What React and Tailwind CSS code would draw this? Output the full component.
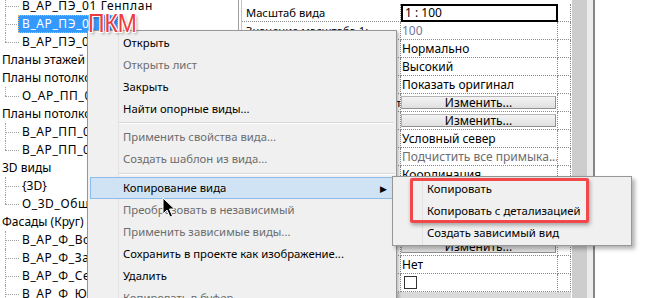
import React from 'react';

const tree = [
  { text: 'В_АР_ПЭ_01 Генплан', child: true },
  { text: 'В_АР_ПЭ_01', child: true, selected: true },
  { text: 'В_АР_ПЭ_02', child: true, last: true },
  { text: 'Планы этажей (Круг)' },
  { text: 'Планы потолков (Круг)' },
  { text: 'О_АР_ПП_01', child: true, last: true },
  { text: 'Планы потолков (Отделка)' },
  { text: 'В_АР_ПП_01', child: true },
  { text: 'В_АР_ПП_02', child: true, last: true },
  { text: '3D виды' },
  { text: '{3D}', child: true },
  { text: 'О_3D_Общий', child: true, last: true },
  { text: 'Фасады (Круг)' },
  { text: 'В_АР_Ф_Восток', child: true },
  { text: 'В_АР_Ф_Запад', child: true },
  { text: 'В_АР_Ф_Север', child: true },
  { text: 'В_АР_Ф_Юг', child: true },
];

const props = [
  { label: 'Масштаб вида', value: '1 : 100', kind: 'box' },
  { label: 'Значение масштаба       1:', value: '100', kind: 'ro' },
  { label: 'Отображать модель', value: 'Нормально' },
  { label: 'Уровень детализации', value: 'Высокий' },
  { label: 'Видимость элементов', value: 'Показать оригинал' },
  { label: 'Переопределения видимости', value: 'Изменить...', kind: 'btn' },
  { label: 'Параметры отображения', value: 'Изменить...', kind: 'btn' },
  { label: 'Ориентация', value: 'Условный север' },
  { label: 'Соединение стен', value: 'Подчистить все примыка...', kind: 'gray' },
  { label: 'Дисциплина', value: 'Координация' },
  { label: 'Показать скрытые линии', value: 'По дисциплине' },
  { label: 'Цветовая схема', value: '<нет>' },
  { label: 'Расположение схемы', value: 'Фон' },
  { label: 'Схема', value: 'Изменить...', kind: 'btn' },
  { label: 'Подложка', value: 'Нет' },
  { label: 'Обрезать вид', value: '', kind: 'check' },
];

const menu = [
  { t: 'Открыть' },
  { t: 'Открыть лист', off: true },
  { t: 'Закрыть' },
  { t: 'Найти опорные виды...' },
  { sep: 'h-[6px]' },
  { t: 'Применить свойства вида...', off: true },
  { t: 'Создать шаблон из вида...', off: true },
  { sep: 'h-[7px]' },
  { t: 'Копирование вида', hot: true, sub: true },
  { t: 'Преобразовать в независимый', off: true },
  { t: 'Применить зависимые виды...', off: true },
  { t: 'Сохранить в проекте как изображение...' },
  { t: 'Удалить' },
  { t: 'Копировать в буфер', off: true },
];

function TreeRow({ row }) {
  const wide = row.text.includes('_') ? 'tracking-[0.6px]' : '';
  return (
    <div className="flex h-[18px] items-center whitespace-nowrap">
      {row.child ? (
        <div className="relative ml-[5px] h-full w-[17px] shrink-0">
          <div className={`absolute left-0 top-0 w-0 border-l border-dotted border-[#a0a0a0] ${row.last ? 'h-[9px]' : 'h-full'}`} />
          <div className="absolute left-0 top-[9px] h-0 w-[14px] border-t border-dotted border-[#a0a0a0]" />
        </div>
      ) : (
        <div className="w-[2px] shrink-0" />
      )}
      <span
        className={
          row.selected
            ? `ml-[-4px] border border-dotted border-[#f0b070] bg-[#3399ff] pl-[3px] pr-[20px] leading-[16px] text-white ${wide}`
            : `leading-[18px] ${wide}`
        }
      >
        {row.text}
      </span>
    </div>
  );
}

function PropValue({ p }) {
  if (p.kind === 'box') {
    return <div className="h-full border-2 border-black pl-[2px] leading-[14px]">{p.value}</div>;
  }
  if (p.kind === 'btn') {
    return (
      <div className="flex h-full items-center py-[2px] pr-[1px]">
        <div className="flex h-full w-full items-center justify-center border border-[#b5b5b5] border-b-[#8f8f8f] border-r-[#8f8f8f] bg-gradient-to-b from-[#f3f3f3] to-[#e0e0e0] leading-none">
          {p.value}
        </div>
      </div>
    );
  }
  if (p.kind === 'check') {
    return (
      <div className="flex h-full items-center pl-[3px]">
        <div className="h-[13px] w-[13px] border border-[#333] bg-white" />
      </div>
    );
  }
  const color = p.kind === 'ro' ? 'text-[#7474a0]' : p.kind === 'gray' ? 'text-[#6d6d6d]' : '';
  return <div className={`overflow-hidden whitespace-nowrap pl-[1px] leading-[17px] ${color}`}>{p.value}</div>;
}

function Cursor() {
  return (
    <svg className="absolute left-[162px] top-[197px]" width="14" height="22" viewBox="0 0 14 22">
      <path d="M1 1 L1 17 L5 13 L8 20 L10.5 19 L7.5 12 L12.5 12 Z" fill="#000" stroke="#fff" strokeWidth="1" strokeLinejoin="miter" />
    </svg>
  );
}

export default function App() {
  return (
    <div className="relative h-[298px] w-[655px] overflow-hidden bg-white font-['Noto_Sans',sans-serif] text-[12px] text-black">
      <div className="flex h-full">
        {/* Диспетчер проекта */}
        <div className="mt-[-3px] w-[238px] shrink-0">
          {tree.map((row, i) => (
            <TreeRow key={i} row={row} />
          ))}
        </div>

        {/* Разделитель */}
        <div className="h-full w-[4px] shrink-0 border-l border-r border-l-[#a0a0a0] border-r-[#c4c4c4]" />

        {/* Свойства */}
        <div className="shrink-0 pt-[4px]">
          <div className="grid grid-cols-[159px_157px_13px]">
            {props.map((p, i) => (
              <React.Fragment key={i}>
                <div className="h-[18px] overflow-hidden whitespace-nowrap border-b border-r border-dotted border-[#8a8a8a] pl-[4px] text-[11.2px] leading-[18px]">
                  {p.label}
                </div>
                <div className={`h-[18px] border-dotted border-[#8a8a8a] ${p.kind === 'box' ? '' : 'border-b border-r'}`}>
                  <PropValue p={p} />
                </div>
                <div className="h-[18px] border-b border-r border-dotted border-[#8a8a8a]" />
              </React.Fragment>
            ))}
            <div className="col-span-3 h-[18px] bg-[#dadada]" />
          </div>
        </div>

        {/* Полоса прокрутки */}
        <div className="ml-[1px] flex h-full shrink-0">
          <div className="h-full w-[15px] bg-[#cdcdcd]" />
          <div className="h-full w-[6px] bg-[#ececec]" />
          <div className="h-full w-[2px] bg-[#868686]" />
        </div>
        <div className="flex-1" />
      </div>

      {/* Контекстное меню */}
      <div className="absolute left-[87px] top-[30px] w-[310px] border border-[#979797] bg-[#f0f0f0] pt-[1px] text-[11.3px] shadow-[2px_2px_3px_rgba(0,0,0,0.25)]">
        <div className="absolute bottom-0 left-[30px] top-0 w-[2px] border-l border-[#e2e2e2]" />
        {menu.map((m, i) =>
          m.sep ? (
            <div key={i} className={`relative flex items-center pl-[31px] pr-[2px] ${m.sep}`}>
              <div className="h-[2px] w-full border-t border-[#d7d7d7] bg-white" />
            </div>
          ) : (
            <div key={i} className="relative h-[22px] px-[2px]">
              <div
                className={`flex h-full items-center pl-[32px] ${m.hot ? 'border border-[#8fbbe8] bg-[#d0e3f5]' : 'border border-transparent'} ${m.off ? 'text-[#6d6d6d]' : 'text-black'}`}
              >
                <span className="flex-1 whitespace-nowrap">{m.t}</span>
                {m.sub && <span className="mr-[6px] text-[9px] leading-none">▶</span>}
              </div>
            </div>
          ),
        )}
      </div>

      {/* Подменю */}
      <div className="absolute left-[392px] top-[176px] w-[240px] border border-[#979797] bg-[#f0f0f0] py-[1px] text-[11.3px] shadow-[3px_3px_4px_rgba(0,0,0,0.3)]">
        <div className="absolute bottom-0 left-[29px] top-0 w-0 border-l border-[#e2e2e2]" />
        {['Копировать', 'Копировать с детализацией', 'Создать зависимый вид'].map((t) => (
          <div key={t} className="relative flex h-[22px] items-center whitespace-nowrap pl-[34px]">
            {t}
          </div>
        ))}
      </div>

      {/* Выделение */}
      <div className="absolute left-[410px] top-[178px] h-[45px] w-[179px] rounded-[2px] border-[3px] border-[#f2474b] shadow-[1px_2px_4px_rgba(0,0,0,0.35)]" />

      {/* ПКМ */}
      <div className="absolute left-[88px] top-[10px] origin-left scale-x-[0.88] font-['Liberation_Sans',sans-serif] text-[26px] leading-none text-[#ec3b3f] [text-shadow:0_0_2px_#fff,1px_1px_0_#fff,-1px_-1px_0_#fff,1px_-1px_0_#fff,-1px_1px_0_#fff,2px_2px_3px_rgba(0,0,0,0.45)]">
        ПКМ
      </div>

      <Cursor />
    </div>
  );
}
